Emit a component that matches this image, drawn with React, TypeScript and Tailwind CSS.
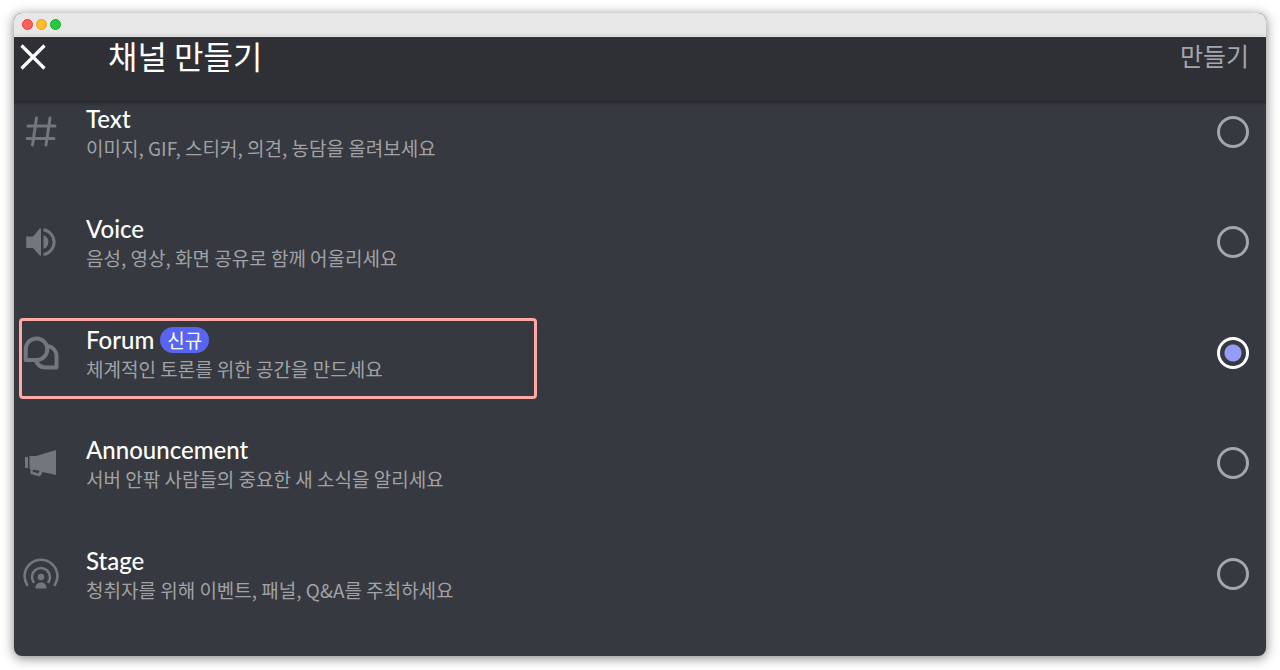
import React, { useState } from 'react';

type Channel = {
  id: string;
  name: string;
  description: string;
  icon: React.ReactNode;
  isNew?: boolean;
};

const HashIcon = () => (
  <svg viewBox="0 0 36 36" className="size-9" fill="none" stroke="currentColor" strokeWidth="3" strokeLinecap="round" aria-hidden="true">
    <path d="M5 13h27M4 25.5h27M13.5 5 9.5 32M27 5 23 32" />
  </svg>
);

const SpeakerIcon = () => (
  <svg viewBox="0 0 36 36" className="size-9" aria-hidden="true">
    <path d="M18 6v26a.8.8 0 0 1-1.3.5L10 25H4a.8.8 0 0 1-.8-.8V14.300a.8.8 0 0 1 .8-.8h6l6.700-8A.8.8 0 0 1 18 6Z" fill="currentColor" />
    <path d="M20.500 12.300a7 7 0 0 1 0 13.400Z" fill="currentColor" />
    <path d="M20.500 6.800a12.500 12.500 0 0 1 0 24.700" fill="none" stroke="currentColor" strokeWidth="3" />
  </svg>
);

const ForumIcon = () => (
  <svg viewBox="0 0 36 36" className="size-9" fill="none" stroke="currentColor" strokeWidth="4" strokeLinejoin="round" aria-hidden="true">
    <path d="M13.5 4.5a10.8 10.8 0 1 1 0 21.6H2.700V15.300A10.8 10.8 0 0 1 13.5 4.5Z" />
    <path d="M25 12c5 1 8.500 5 8.500 10v11.500H23c-4.500 0-8.500-2.500-10-7" />
  </svg>
);

const MegaphoneIcon = () => (
  <svg viewBox="0 0 36 36" className="size-9" fill="currentColor" aria-hidden="true">
    <path d="M2 13h3v11H2Z" />
    <path
      fillRule="evenodd"
      d="M33 6v25L19.5 28l-1.800 3.500a1.500 1.500 0 0 1-1.700.8l-7.500-2a1.500 1.500 0 0 1-1.100-1.600L7.500 25h-1V12H13ZM10 25.500l-.3 2.300 5.600 1.400 1.500-2.200Z"
    />
  </svg>
);

const StageIcon = () => (
  <svg viewBox="0 0 36 36" className="size-9" aria-hidden="true">
    <g fill="none" stroke="currentColor" strokeWidth="2.6" strokeLinecap="round">
      <path d="M4.200 30A16.400 16.400 0 1 1 31.800 30" />
      <path d="M10.500 27A9 9 0 1 1 25.500 27" />
    </g>
    <circle cx="18" cy="22" r="3.300" fill="currentColor" />
    <path d="M12.500 33.500v-1c0-3 2.500-5 5.500-5s5.500 2 5.500 5v1Z" fill="currentColor" />
  </svg>
);

const channels: Channel[] = [
  { id: 'text', name: 'Text', description: '이미지, GIF, 스티커, 의견, 농담을 올려보세요', icon: <HashIcon /> },
  { id: 'voice', name: 'Voice', description: '음성, 영상, 화면 공유로 함께 어울리세요', icon: <SpeakerIcon /> },
  { id: 'forum', name: 'Forum', description: '체계적인 토론를 위한 공간을 만드세요', icon: <ForumIcon />, isNew: true },
  { id: 'announcement', name: 'Announcement', description: '서버 안팎 사람들의 중요한 새 소식을 알리세요', icon: <MegaphoneIcon /> },
  { id: 'stage', name: 'Stage', description: '청취자를 위해 이벤트, 패널, Q&A를 주최하세요', icon: <StageIcon /> },
];

const TitleBar: React.FC = () => (
  <div className="flex h-6 shrink-0 items-center gap-[3px] border-b border-white bg-[#e7e7e7] px-2">
    <span className="size-[11px] rounded-full border border-[#e0443e] bg-[#ff5f57]" />
    <span className="size-[11px] rounded-full border border-[#dea123] bg-[#ffbd2e]" />
    <span className="size-[11px] rounded-full border border-[#1aab29] bg-[#28c840]" />
  </div>
);

const Header: React.FC = () => (
  <header className="relative flex h-16 shrink-0 items-start bg-[#2f3035] pl-[3px] pr-[17px] shadow-[0_1px_4px_rgba(0,0,0,0.5)]">
    <button type="button" aria-label="닫기" className="flex h-10 w-8 items-center justify-center text-white">
      <svg viewBox="0 0 26 26" className="size-[26px]" fill="none" stroke="currentColor" strokeWidth="3.2" aria-hidden="true">
        <path d="M1.5 1.5l23 23M24.5 1.5l-23 23" />
      </svg>
    </button>
    <h1 className="ml-[59px] flex-1 text-[32px] leading-9 text-white">채널 만들기</h1>
    <button type="button" className="text-[25px] leading-9 text-[#a3a6aa]">만들기</button>
  </header>
);

const App: React.FC = () => {
  const [selected, setSelected] = useState('forum');

  return (
    <div className="flex min-h-screen bg-white p-[14px] pt-[13px] font-['Noto_Sans_CJK_KR',sans-serif]">
      <div className="flex flex-1 flex-col overflow-hidden rounded-lg bg-[#36393f] shadow-[0_2px_12px_rgba(0,0,0,0.5)]">
        <TitleBar />
        <Header />
        <main className="flex flex-1 flex-col pb-[3px]">
          {channels.map((channel) => (
            <label key={channel.id} htmlFor={channel.id} className="relative flex min-h-24 flex-1 items-start pl-[9px] pr-[17px]">
              <span className="mt-3 text-[#72767d]">{channel.icon}</span>
              <span className="ml-[27px] flex flex-1 flex-col pt-1">
                <span className="flex h-7 items-center font-['Lato','Noto_Sans_CJK_KR',sans-serif] text-2xl leading-7 font-medium text-white">
                  {channel.name}
                  {channel.isNew && (
                    <span className="ml-1.5 rounded-full bg-[#5865f2] px-[7px] font-['Noto_Sans_CJK_KR',sans-serif] text-[19px] leading-[26px] font-normal">
                      신규
                    </span>
                  )}
                </span>
                <span className="text-[19px] leading-[30px] text-[#a0a2a6]">{channel.description}</span>
              </span>
              <input
                id={channel.id}
                type="radio"
                name="channel"
                checked={selected === channel.id}
                onChange={() => setSelected(channel.id)}
                className="mt-[15px] size-8 appearance-none rounded-full border-[3px] border-[#a3a6aa] checked:border-white checked:bg-[radial-gradient(circle,#949cf7_8px,transparent_9px)]"
              />
              {channel.isNew && (
                <span className="pointer-events-none absolute -top-1 left-[5px] h-[81px] w-[518px] rounded border-[3px] border-[#ffa8a8]" />
              )}
            </label>
          ))}
        </main>
      </div>
    </div>
  );
};

export default App;
